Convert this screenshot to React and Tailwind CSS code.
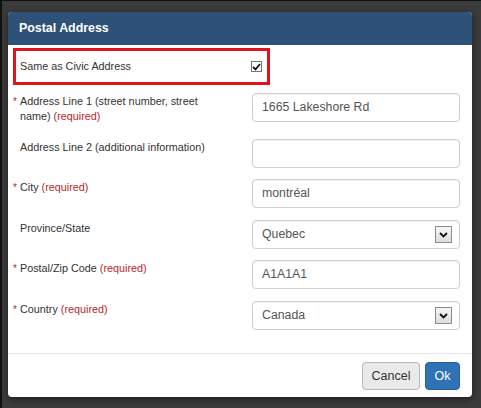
const fields = [
  { label: 'Address Line 1 (street number, street name)', req: true, value: '1665 Lakeshore Rd', h: 'h-[46px]' },
  { label: 'Address Line 2 (additional information)', req: false, value: '', h: 'h-[40px]' },
  { label: 'City', req: true, value: 'montréal', h: 'h-[41px]' },
  { label: 'Province/State', req: false, value: 'Quebec', select: true, h: 'h-[40px]' },
  { label: 'Postal/Zip Code', req: true, value: 'A1A1A1', h: 'h-[41px]' },
  { label: 'Country', req: true, value: 'Canada', select: true, h: 'h-[29px]' },
];

const Chevron = () => (
  <div className="flex h-[17px] w-[17px] items-center justify-center border border-[#8a8a8a] bg-gradient-to-b from-[#f7f7f7] to-[#dcdcdc]">
    <svg width="9" height="6" viewBox="0 0 9 6">
      <path d="M1 1l3.5 3.5L8 1" fill="none" stroke="#111" strokeWidth="1.8" />
    </svg>
  </div>
);

const Row = ({ field }) => (
  <div className={`flex items-start ${field.h}`}>
    <div className="flex w-[239px] pr-[8px] pt-[1px] text-[10.8px] leading-[15px] text-[#333]">
      <span className="w-[7px] shrink-0 text-[10px] text-[#b9272a]">{field.req ? '*' : ''}</span>
      <span className="w-[192px]">
        {field.label}
        {field.req && <span className="text-[#b9272a]"> (required)</span>}
      </span>
    </div>
    <div className="flex h-[29px] w-[208px] items-center justify-between rounded-[4px] border border-[#cfcfcf] pl-[9px] pr-[7px] text-[12.3px] text-[#555] shadow-[inset_0_1px_1px_rgba(0,0,0,0.06)]">
      <span>{field.value}</span>
      {field.select && <Chevron />}
    </div>
  </div>
);

export default function App() {
  return (
    <div className="h-[408px] w-[481px] border-l-2 border-t border-[#111] bg-[#3b3b3b] font-['Liberation_Sans',Arial,sans-serif]">
      <div className="ml-[6px] mt-[11px] h-[385px] w-[464px] overflow-hidden rounded-[4px] bg-white shadow-[0_2px_6px_rgba(0,0,0,0.5)]">
        <div className="flex h-[33px] items-center bg-[#2d5177] px-[11px] text-[12.4px] font-bold text-white">
          Postal Address
        </div>
        <div className="pl-[5px] pr-[12px]">
          <div className="mt-[3px] flex h-[37px] w-[257px] items-center justify-between border-[3px] border-[#e0141f] pl-[4px] pr-[5px] text-[10.8px] text-[#333]">
            <span>Same as Civic Address</span>
            <span className="flex h-[11px] w-[11px] items-center justify-center border border-[#777] bg-white">
              <svg width="9" height="8" viewBox="0 0 9 8">
                <path d="M1 4l2.5 2.5L8 1" fill="none" stroke="#111" strokeWidth="1.8" />
              </svg>
            </span>
          </div>
          <div className="mt-[8px]">
            {fields.map((f) => (
              <Row key={f.label} field={f} />
            ))}
          </div>
        </div>
        <div className="mt-[23px] flex justify-end gap-[5px] border-t border-[#e5e5e5] px-[12px] pt-[8px]">
          <button className="h-[28px] w-[58px] rounded-[4px] border border-[#b8b8b8] bg-[#e9e9e9] text-[12.5px] text-[#333]">
            Cancel
          </button>
          <button className="h-[28px] w-[35px] rounded-[4px] border border-[#2a5f9e] bg-[#2f72b6] text-[12.5px] text-white">
            Ok
          </button>
        </div>
      </div>
    </div>
  );
}
